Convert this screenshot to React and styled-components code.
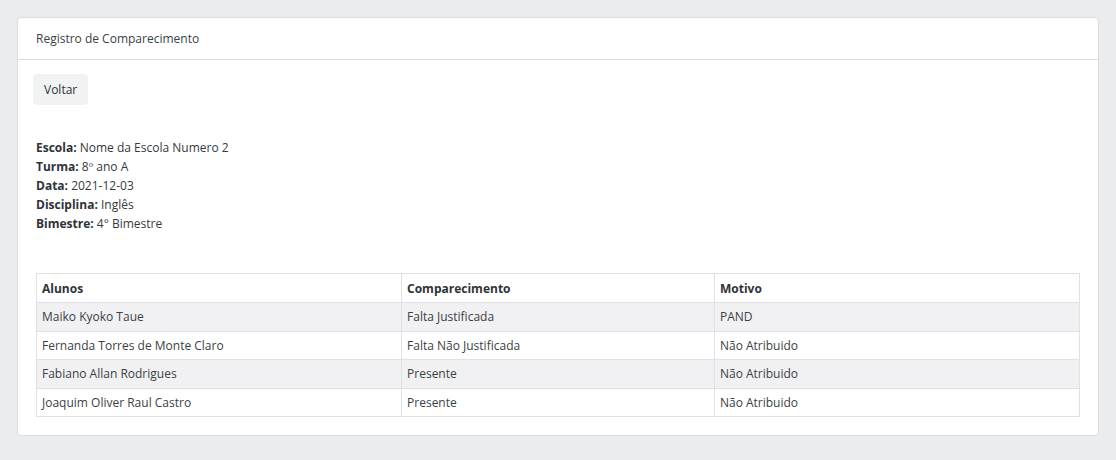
import React from "react";
import styled, { createGlobalStyle } from "styled-components";

const Global = createGlobalStyle`
  html, body { margin: 0; padding: 0; background: #ebecee; }
  body { font-family: "Open Sans", "Noto Sans", sans-serif; font-size: 12px; color: #343a40; }
  * { box-sizing: border-box; }
`;

const Page = styled.div`
  padding: 17px 17px 24px 17px;
`;

const Card = styled.div`
  background: #fff;
  border: 1px solid #dadcde;
  border-radius: 4px;
`;

const CardHeader = styled.div`
  height: 42px;
  padding: 0 18px;
  display: flex;
  align-items: center;
  border-bottom: 1px solid #dadcde;
  color: #3a3f44;
`;

const CardBody = styled.div`
  padding: 14px 15px 18px 15px;
`;

const Button = styled.button`
  font: inherit;
  color: #2f3438;
  background: #f0f2f4;
  border: none;
  border-radius: 4px;
  height: 31px;
  padding: 0 11px;
`;

const Info = styled.div`
  margin: 33px 3px 0 3px;
  line-height: 19px;
`;

const Label = styled.strong`
  font-weight: 700;
  color: #2e3338;
`;

const Table = styled.table`
  margin: 40px 3px 0 3px;
  width: calc(100% - 6px);
  border-collapse: collapse;
  table-layout: fixed;
`;

const Th = styled.th`
  text-align: left;
  font-weight: 700;
  color: #2e3338;
  border: 1px solid #dfe1e4;
  height: 29px;
  padding: 0 5px;
  width: ${(p) => p.$w};
`;

const Tr = styled.tr`
  background: ${(p) => (p.$striped ? "#f1f1f3" : "#fff")};
`;

const Td = styled.td`
  border: 1px solid #dfe1e4;
  height: 28.5px;
  padding: 0 5px;
  color: #3a3f44;
`;

const rows = [
  ["Maiko Kyoko Taue", "Falta Justificada", "PAND"],
  ["Fernanda Torres de Monte Claro", "Falta Não Justificada", "Não Atribuido"],
  ["Fabiano Allan Rodrigues", "Presente", "Não Atribuido"],
  ["Joaquim Oliver Raul Castro", "Presente", "Não Atribuido"],
];

export default function App() {
  return (
    <Page>
      <Global />
      <Card>
        <CardHeader>Registro de Comparecimento</CardHeader>
        <CardBody>
          <Button>Voltar</Button>
          <Info>
            <div><Label>Escola:</Label> Nome da Escola Numero 2</div>
            <div><Label>Turma:</Label> 8º ano A</div>
            <div><Label>Data:</Label> 2021-12-03</div>
            <div><Label>Disciplina:</Label> Inglês</div>
            <div><Label>Bimestre:</Label> 4° Bimestre</div>
          </Info>
          <Table>
            <thead>
              <tr>
                <Th $w="35%">Alunos</Th>
                <Th $w="30%">Comparecimento</Th>
                <Th $w="35%">Motivo</Th>
              </tr>
            </thead>
            <tbody>
              {rows.map((r, i) => (
                <Tr key={i} $striped={i % 2 === 0}>
                  {r.map((c, j) => (
                    <Td key={j}>{c}</Td>
                  ))}
                </Tr>
              ))}
            </tbody>
          </Table>
        </CardBody>
      </Card>
    </Page>
  );
}
